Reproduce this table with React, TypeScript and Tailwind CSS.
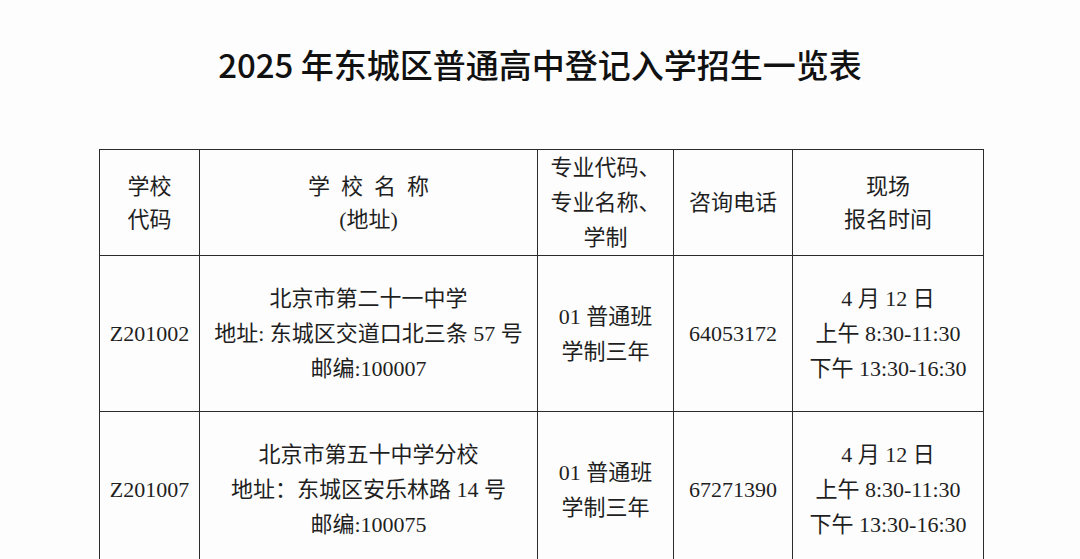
import React from 'react';

const serif = { fontFamily: '"Liberation Serif", "Noto Sans CJK SC", serif' };

type Row = {
  code: string;
  name: string;
  addr: string;
  zip: string;
  phone: string;
};

const rows: Row[] = [
  {
    code: 'Z201002',
    name: '北京市第二十一中学',
    addr: '地址: 东城区交道口北三条 57 号',
    zip: '邮编:100007',
    phone: '64053172',
  },
  {
    code: 'Z201007',
    name: '北京市第五十中学分校',
    addr: '地址：东城区安乐林路 14 号',
    zip: '邮编:100075',
    phone: '67271390',
  },
];

const cell = 'border-[1.5px] border-[#2b2b2b] text-center align-middle p-0';

export default function App() {
  return (
    <div className="h-[559px] w-[1080px] overflow-hidden bg-[#fdfdfd] text-[#1f1f1f]">
      {/* Title */}
      <div className="pt-[44px] flex justify-center">
        <h1
          className="text-[33px] leading-[40px] font-medium text-[#111]"
          style={{ fontFamily: '"Noto Sans CJK SC", sans-serif' }}
        >
          2025 年东城区普通高中登记入学招生一览表
        </h1>
      </div>

      {/* Table */}
      <div className="mt-[65px] pl-[99px]">
        <table
          className="border-collapse table-fixed w-[884px] text-[22px] leading-[35px]"
          style={serif}
        >
          <colgroup>
            <col className="w-[100px]" />
            <col className="w-[338px]" />
            <col className="w-[136px]" />
            <col className="w-[119px]" />
            <col className="w-[191px]" />
          </colgroup>
          <thead>
            <tr className="h-[105px]">
              <th className={`${cell} font-normal leading-[33px]`}>
                学校
                <br />
                代码
              </th>
              <th className={`${cell} font-normal leading-[33px]`}>
                学&nbsp;&nbsp;校&nbsp;&nbsp;名&nbsp;&nbsp;称
                <br />
                (地址)
              </th>
              <th className={`${cell} font-normal leading-[35px]`}>
                专业代码、
                <br />
                专业名称、
                <br />
                学制
              </th>
              <th className={`${cell} font-normal`}>咨询电话</th>
              <th className={`${cell} font-normal leading-[33px]`}>
                现场
                <br />
                报名时间
              </th>
            </tr>
          </thead>
          <tbody>
            {rows.map((r) => (
              <tr key={r.code} className="h-[156px]">
                <td className={cell}>{r.code}</td>
                <td className={cell}>
                  {r.name}
                  <br />
                  {r.addr}
                  <br />
                  {r.zip}
                </td>
                <td className={cell}>
                  01 普通班
                  <br />
                  学制三年
                </td>
                <td className={cell}>{r.phone}</td>
                <td className={cell}>
                  4 月 12 日
                  <br />
                  上午 8:30-11:30
                  <br />
                  下午 13:30-16:30
                </td>
              </tr>
            ))}
          </tbody>
        </table>
      </div>
    </div>
  );
}
